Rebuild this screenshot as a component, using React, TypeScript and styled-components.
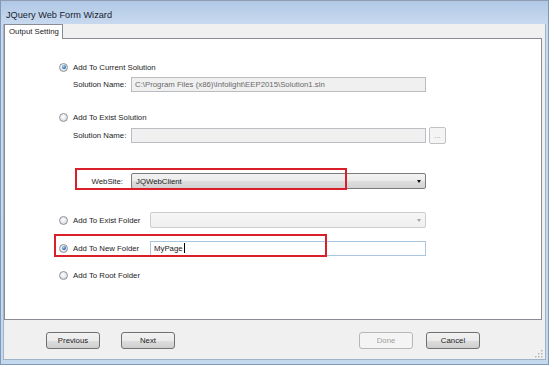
import styled, { createGlobalStyle } from "styled-components";

const GlobalStyle = createGlobalStyle`
  html, body { margin: 0; padding: 0; background: #ffffff; }
  body {
    font-family: "Liberation Sans", Arial, sans-serif;
    font-size: 7.8px;
    color: #1c1c1c;
  }
  * { box-sizing: border-box; }
`;

const Window = styled.div`
  width: 549px;
  height: 365px;
  border: 1px solid #8099b9;
  border-top-color: #8e9db0;
  padding: 0 2px 4px;
  background: linear-gradient(180deg, #b1c8e5 0px, #c8daef 24px, #c4d8ee 100%);
  display: flex;
  flex-direction: column;
`;

const TitleBar = styled.div`
  height: 23px;
  padding: 5px 0 0 3px;
  display: flex;
  align-items: center;
  font-size: 9.2px;
  color: #1a2433;
`;

const Client = styled.div`
  flex: 1;
  display: flex;
  flex-direction: column;
  background: #f0f0f0;
  border: 1px solid #9fb2c9;
  border-top: none;
`;

const TabStrip = styled.div`
  height: 14px;
  display: flex;
  align-items: flex-start;
`;

const Tab = styled.div`
  position: relative;
  z-index: 1;
  width: 59px;
  height: 15px;
  padding-left: 4px;
  line-height: 13px;
  background: #ffffff;
  border: 1px solid #898c95;
  border-bottom: none;
  white-space: nowrap;
`;

const TabPage = styled.div`
  height: 282px;
  margin-right: 3px;
  background: #ffffff;
  border: 1px solid #898c95;
  padding: 0 0 0 54px;
  display: flex;
  flex-direction: column;
  align-items: flex-start;
`;

const OptionRow = styled.div<{ $mt: number; $h?: number }>`
  position: relative;
  display: flex;
  align-items: center;
  height: ${p => p.$h ?? 14}px;
  margin-top: ${p => p.$mt}px;
  white-space: nowrap;
`;

const FieldRow = styled(OptionRow)`
  padding-left: 14px;
`;

const Radio = styled.span<{ $checked?: boolean }>`
  position: relative;
  flex: none;
  width: 9px;
  height: 9px;
  margin-right: 5px;
  border-radius: 50%;
  border: 1px solid #8f9399;
  background: radial-gradient(circle at 45% 40%, #ffffff 0%, #e6e8ea 50%, #c5c9ce 100%);
  &::after {
    content: "";
    display: ${p => (p.$checked ? "block" : "none")};
    position: absolute;
    left: 1.5px;
    top: 1.5px;
    width: 4px;
    height: 4px;
    border-radius: 50%;
    background: radial-gradient(circle at 40% 35%, #b5dcfb 0%, #3574bb 55%, #1b4a86 100%);
  }
`;

const Label = styled.span<{ $w?: number; $right?: boolean }>`
  flex: none;
  width: ${p => (p.$w ? `${p.$w}px` : "auto")};
  text-align: ${p => (p.$right ? "right" : "left")};
  padding-right: ${p => (p.$right ? 8 : 0)}px;
`;

const TextBox = styled.div<{ $w: number; $variant?: "readonly" | "disabled" | "focus" }>`
  width: ${p => p.$w}px;
  height: 15px;
  padding: 0 3px;
  display: flex;
  align-items: center;
  overflow: hidden;
  white-space: nowrap;
  border: 1px solid ${p => (p.$variant === "focus" ? "#aac7e2" : "#b9bcc0")};
  background: ${p => (p.$variant === "focus" ? "#ffffff" : "#f0f0f0")};
  color: ${p => (p.$variant === "readonly" ? "#6a6a6a" : "#1c1c1c")};
`;

const Caret = styled.span`
  width: 1px;
  height: 10px;
  margin-left: 1px;
  background: #000000;
`;

const BrowseButton = styled.div`
  width: 17px;
  height: 17px;
  margin-left: 3px;
  border: 1px solid #bfc3c7;
  border-radius: 2px;
  background: #f4f4f4;
  color: #9a9a9a;
  display: flex;
  align-items: flex-end;
  justify-content: center;
  padding-bottom: 3px;
  line-height: 1;
`;

const Combo = styled.div<{ $w: number; $disabled?: boolean }>`
  width: ${p => p.$w}px;
  height: 16px;
  padding: 0 4px;
  display: flex;
  align-items: center;
  border: 1px solid ${p => (p.$disabled ? "#cbcdcf" : "#7c7c7c")};
  border-radius: 2px;
  background: ${p =>
    p.$disabled
      ? "linear-gradient(180deg, #f6f6f6 0%, #efefef 100%)"
      : "linear-gradient(180deg, #f3f3f3 0%, #ebebeb 50%, #dedede 51%, #d3d3d3 100%)"};
`;

const Arrow = styled.span<{ $disabled?: boolean }>`
  margin-left: auto;
  width: 0;
  height: 0;
  border-left: 2.5px solid transparent;
  border-right: 2.5px solid transparent;
  border-top: 3px solid ${p => (p.$disabled ? "#a4a4a4" : "#111111")};
`;

const Highlight = styled.div<{ $l: number; $t: number; $w: number; $h: number }>`
  position: absolute;
  left: ${p => p.$l}px;
  top: ${p => p.$t}px;
  width: ${p => p.$w}px;
  height: ${p => p.$h}px;
  border: 2px solid #d81f2a;
  pointer-events: none;
`;

const Footer = styled.div`
  position: relative;
  flex: 1;
  display: flex;
  align-items: flex-start;
  padding: 12px 65px 0 42px;
`;

const ButtonGroup = styled.div<{ $gap: number; $push?: boolean }>`
  display: flex;
  gap: ${p => p.$gap}px;
  margin-left: ${p => (p.$push ? "auto" : "0")};
`;

const Button = styled.button`
  width: 54px;
  height: 17px;
  padding: 0;
  font: inherit;
  color: #1c1c1c;
  border: 1px solid #707070;
  border-radius: 3px;
  background: linear-gradient(180deg, #f2f2f2 0%, #ebebeb 50%, #dddddd 51%, #cfcfcf 100%);
  &:disabled {
    color: #a0a0a0;
    border-color: #b4b8bc;
    background: #f4f4f4;
  }
`;

const Grip = styled.svg`
  position: absolute;
  right: 2px;
  bottom: 1px;
`;

export default function App() {
  return (
    <>
      <GlobalStyle />
      <Window>
        <TitleBar>JQuery Web Form Wizard</TitleBar>
        <Client>
          <TabStrip>
            <Tab>Output Setting</Tab>
          </TabStrip>
          <TabPage>
            <OptionRow $mt={21}>
              <Radio $checked />
              <Label>Add To Current Solution</Label>
            </OptionRow>
            <FieldRow $mt={3} $h={15}>
              <Label $w={58}>Solution Name:</Label>
              <TextBox $w={295} $variant="readonly">
                {"C:\\Program Files (x86)\\Infolight\\EEP2015\\Solution1.sln"}
              </TextBox>
            </FieldRow>

            <OptionRow $mt={18}>
              <Radio />
              <Label>Add To Exist Solution</Label>
            </OptionRow>
            <FieldRow $mt={3} $h={17}>
              <Label $w={58}>Solution Name:</Label>
              <TextBox $w={295} $variant="disabled" />
              <BrowseButton>...</BrowseButton>
            </FieldRow>

            <FieldRow $mt={29} $h={16}>
              <Label $w={58} $right>WebSite:</Label>
              <Combo $w={295}>
                JQWebClient
                <Arrow />
              </Combo>
              <Highlight $l={16} $t={-5} $w={272} $h={22} />
            </FieldRow>

            <OptionRow $mt={23} $h={16}>
              <Radio />
              <Label $w={77}>Add To Exist Folder</Label>
              <Combo $w={276} $disabled>
                <Arrow $disabled />
              </Combo>
            </OptionRow>

            <OptionRow $mt={12} $h={16}>
              <Radio $checked />
              <Label $w={77}>Add To New Folder</Label>
              <TextBox $w={276} $variant="focus">
                MyPage
                <Caret />
              </TextBox>
              <Highlight $l={-5} $t={-6} $w={273} $h={23} />
            </OptionRow>

            <OptionRow $mt={12}>
              <Radio />
              <Label>Add To Root Folder</Label>
            </OptionRow>
          </TabPage>
          <Footer>
            <ButtonGroup $gap={21}>
              <Button>Previous</Button>
              <Button>Next</Button>
            </ButtonGroup>
            <ButtonGroup $gap={13} $push>
              <Button disabled>Done</Button>
              <Button>Cancel</Button>
            </ButtonGroup>
            <Grip width="9" height="9" viewBox="0 0 9 9">
              {[
                [7, 1],
                [7, 4],
                [4, 4],
                [7, 7],
                [4, 7],
                [1, 7],
              ].map(([x, y]) => (
                <rect key={`${x}-${y}`} x={x} y={y} width="1.5" height="1.5" fill="#b8b8b8" />
              ))}
            </Grip>
          </Footer>
        </Client>
      </Window>
    </>
  );
}
